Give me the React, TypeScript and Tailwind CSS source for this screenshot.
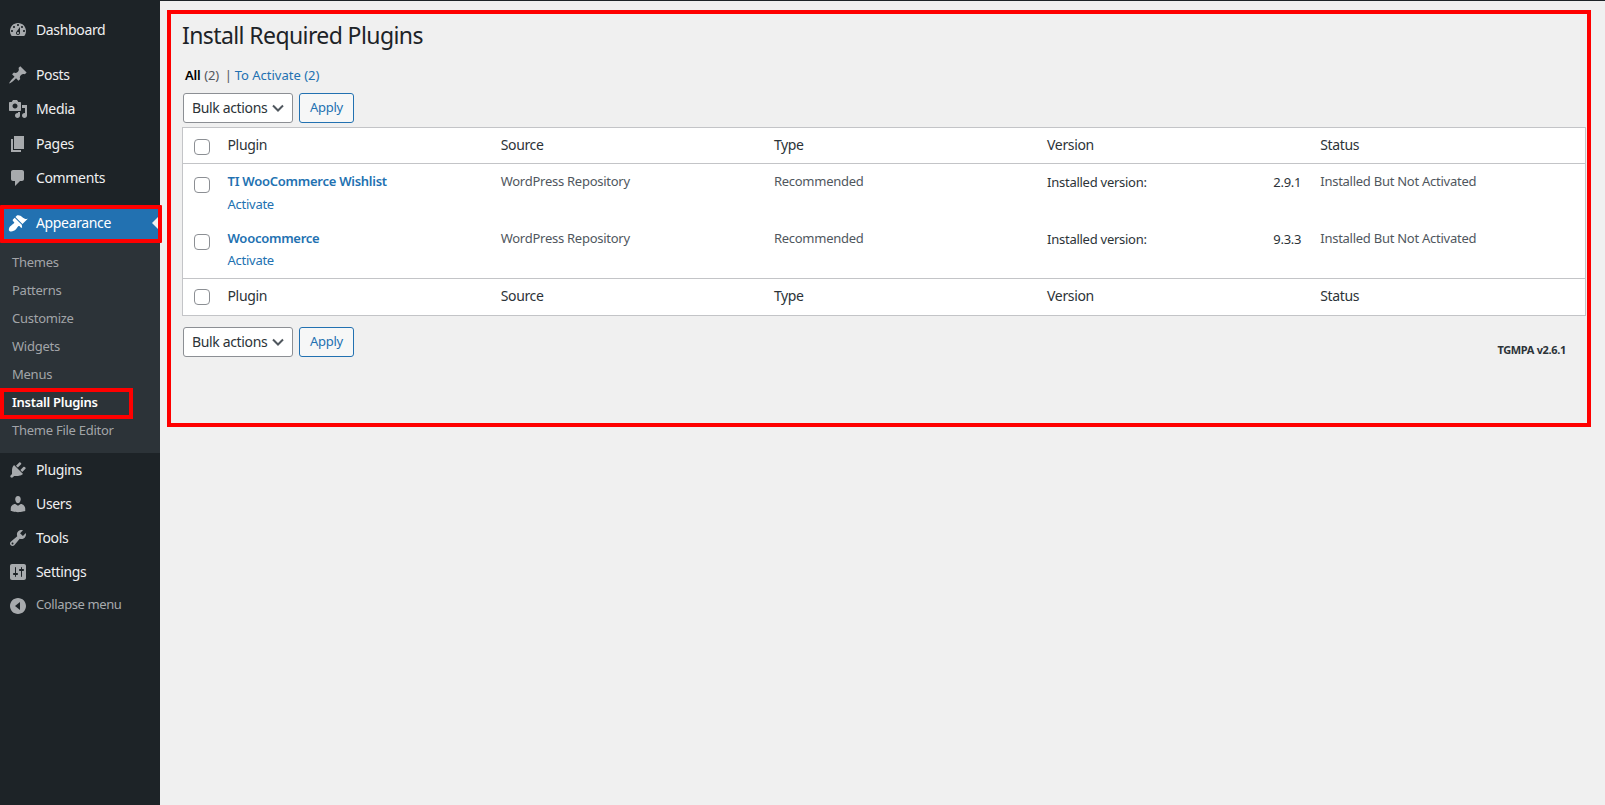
const FONT = "font-['Noto_Sans',sans-serif]";

const ICONS: Record<string, string> = {
    dashboard: 'M3.76 16h12.48c1.1-1.37 1.76-3.11 1.76-5 0-4.42-3.58-8-8-8s-8 3.58-8 8c0 1.89.66 3.63 1.76 5zM10 4c.55 0 1 .45 1 1s-.45 1-1 1-1-.45-1-1 .45-1 1-1zM6 6c.55 0 1 .45 1 1s-.45 1-1 1-1-.45-1-1 .45-1 1-1zm8 0c.55 0 1 .45 1 1s-.45 1-1 1-1-.45-1-1 .45-1 1-1zm-5.37 5.55L12 7v6c0 1.1-.9 2-2 2s-2-.9-2-2c0-.57.24-1.08.63-1.45zM4 10c.55 0 1 .45 1 1s-.45 1-1 1-1-.45-1-1 .45-1 1-1zm12 0c.55 0 1 .45 1 1s-.45 1-1 1-1-.45-1-1 .45-1 1-1zm-5 3c0-.55-.45-1-1-1s-1 .45-1 1 .45 1 1 1 1-.45 1-1z',
    posts: 'M10.44 3.02l1.82-1.82 6.36 6.35-1.83 1.82c-1.05-.68-2.48-.57-3.41.36l-.75.75c-.92.93-1.04 2.35-.35 3.41l-1.83 1.82-2.41-2.41-2.8 2.79c-.42.42-3.38 2.71-3.8 2.29s1.86-3.39 2.28-3.81l2.79-2.79L4.1 9.36l1.83-1.82c1.05.69 2.48.57 3.4-.36l.75-.75c.93-.92 1.05-2.35.36-3.41z',
    media: 'M13 11V4c0-.55-.45-1-1-1h-1.67L9 1H5L3.67 3H2c-.55 0-1 .45-1 1v7c0 .55.45 1 1 1h10c.55 0 1-.45 1-1zM7 4.5c1.38 0 2.5 1.12 2.5 2.5S8.38 9.5 7 9.5 4.5 8.38 4.5 7 5.62 4.5 7 4.5zM14 6h5v10.5c0 1.38-1.12 2.5-2.5 2.5S14 17.88 14 16.5s1.12-2.5 2.5-2.5c.17 0 .34.02.5.05V9h-3V6zm-4 8.05V13h2v3.5c0 1.38-1.12 2.5-2.5 2.5S7 17.88 7 16.5 8.12 14 9.5 14c.17 0 .34.02.5.05z',
    pages: 'M6 15V2h10v13H6zm-1 1h8v2H3V5h2v11z',
    comments: 'M5 2h9c1.1 0 2 .9 2 2v7c0 1.1-.9 2-2 2h-2l-5 5v-5H5c-1.1 0-2-.9-2-2V4c0-1.1.9-2 2-2z',
    appearance: 'M14.48 11.06L7.41 3.99l1.5-1.5c.5-.56 2.3-.47 3.51.32 1.21.8 1.43 1.28 2.91 2.1 1.18.64 2.45 1.26 4.45.85zm-.71.71L6.7 4.7 4.93 6.47c-.39.39-.39 1.02 0 1.41l1.06 1.06c.39.39.39 1.03 0 1.42-.6.6-1.43 1.11-2.21 1.69-.35.26-.7.53-1.01.84C1.43 13.23.1 16.63 1.4 17.9c.4.4 1.06.6 1.8.6 1.64 0 3.64-1.01 4.53-1.9.3-.31.57-.66.83-1.02.58-.77 1.08-1.6 1.69-2.21.39-.39 1.02-.39 1.41 0l1.06 1.06c.39.39 1.02.39 1.41 0z',
    plugins: 'M13.11 4.36L9.87 7.6 8 5.73l3.24-3.24c.35-.34 1.05-.2 1.56.32.52.51.66 1.21.31 1.55zm-8 1.77l.91-1.12 9.01 9.01-1.19.84c-.71.71-2.63 1.16-3.82 1.16H6.14L4.9 17.26c-.59.59-1.54.59-2.12 0-.59-.58-.59-1.53 0-2.12l1.24-1.24v-3.88c0-1.13.4-3.19 1.09-3.89zm7.26 3.97l3.24-3.24c.34-.35 1.04-.21 1.55.31.52.51.66 1.21.31 1.55l-3.24 3.25z',
    users: 'M10 9.25c-2.27 0-2.73-3.44-2.73-3.44C7 4.02 7.82 2 9.97 2c2.16 0 2.98 2.02 2.71 3.81 0 0-.41 3.44-2.68 3.44zm0 2.57L12.72 10c2.39 0 4.52 2.33 4.52 4.53v2.49s-3.65 1.13-7.24 1.13c-3.65 0-7.24-1.13-7.24-1.13v-2.49c0-2.25 1.94-4.48 4.47-4.48z',
    tools: 'M16.68 9.77c-1.34 1.34-3.3 1.67-4.95.99l-5.41 6.52c-.99.99-2.59.99-3.58 0s-.99-2.59 0-3.57l6.52-5.42c-.68-1.65-.35-3.61.99-4.95 1.28-1.28 3.12-1.62 4.72-1.06l-2.89 2.89 2.82 2.82 2.86-2.87c.53 1.58.18 3.39-1.08 4.65zM3.81 16.21c.4.39 1.04.39 1.43 0 .4-.4.4-1.04 0-1.43-.39-.4-1.03-.4-1.43 0-.39.39-.39 1.03 0 1.43z',
    settings: 'M18 16V4c0-1.1-.9-2-2-2H4c-1.1 0-2 .9-2 2v12c0 1.1.9 2 2 2h12c1.1 0 2-.9 2-2zM8 11h1c.55 0 1 .45 1 1s-.45 1-1 1H8v1.5c0 .28-.22.5-.5.5s-.5-.22-.5-.5V13H6c-.55 0-1-.45-1-1s.45-1 1-1h1V5.5c0-.28.22-.5.5-.5s.5.22.5.5V11zm5-2h-1c-.55 0-1-.45-1-1s.45-1 1-1h1V5.5c0-.28.22-.5.5-.5s.5.22.5.5V7h1c.55 0 1 .45 1 1s-.45 1-1 1h-1v5.5c0 .28-.22.5-.5.5s-.5-.22-.5-.5V9z',
    collapse: 'M10 2c4.42 0 8 3.58 8 8s-3.58 8-8 8-8-3.58-8-8 3.58-8 8-8zm2 4l-5 4 5 4z',
};

const Icon = ({ name, className }: { name: string; className: string }) => (
    <span className="flex w-9 shrink-0 justify-center">
        <svg viewBox="0 0 20 20" className={`h-5 w-5 fill-current ${className}`}>
            <path fillRule="evenodd" d={ICONS[name]} />
        </svg>
    </span>
);

const MenuItem = ({ icon, label }: { icon: string; label: string }) => (
    <div className="flex h-[34px] items-center text-[14px] tracking-[-0.025em] text-[#f0f0f1]">
        <Icon name={icon} className="text-[#a7aaad]" />
        <span className="pb-[2px]">{label}</span>
    </div>
);

const SUBMENU = ['Themes', 'Patterns', 'Customize', 'Widgets', 'Menus', 'Install Plugins', 'Theme File Editor'];

function Sidebar() {
    return (
        <aside className="w-40 shrink-0 bg-[#1d2327] pt-[13px]">
            <MenuItem icon="dashboard" label="Dashboard" />
            <div className="mt-[11px]">
                <MenuItem icon="posts" label="Posts" />
                <MenuItem icon="media" label="Media" />
                <div className="mt-px">
                    <MenuItem icon="pages" label="Pages" />
                    <MenuItem icon="comments" label="Comments" />
                </div>
            </div>
            {/* Appearance is the open menu */}
            <div className="relative mt-[11px] flex h-[34px] items-center bg-[#2271b1] text-[14px] tracking-[-0.025em] text-white">
                <Icon name="appearance" className="text-white" />
                <span className="pb-[1px]">Appearance</span>
                <span className="absolute right-[2px] top-1/2 h-0 w-0 -translate-y-1/2 border-y-[6px] border-r-[6px] border-y-transparent border-r-[#f0f0f1]" />
                <span className="pointer-events-none absolute -bottom-[3px] -right-[2px] -top-[1px] left-0 rounded-[1px] border-4 border-[#ff0000]" />
            </div>
            <div className="bg-[#2c3338] pb-[8px] pt-[9px]">
                {SUBMENU.map(item => item === 'Install Plugins' ? (
                    <div key={item} className="relative flex h-[28px] items-center pl-3 text-[13px] font-semibold tracking-[-0.02em] text-white">
                        {item}
                        <span className="pointer-events-none absolute -bottom-[2px] -top-[1px] left-0 w-[133px] border-4 border-[#ff0000]" />
                    </div>
                ) : (
                    <div key={item} className="flex h-[28px] items-center pl-3 text-[13px] tracking-[-0.02em] text-[#c3c4c7]/80">{item}</div>
                ))}
            </div>
            <MenuItem icon="plugins" label="Plugins" />
            <MenuItem icon="users" label="Users" />
            <MenuItem icon="tools" label="Tools" />
            <MenuItem icon="settings" label="Settings" />
            <div className="flex h-[34px] items-center text-[13px] tracking-[-0.03em] text-[#a7aaad]">
                <Icon name="collapse" className="text-[#a7aaad]" />
                <span className="pb-[2px]">Collapse menu</span>
            </div>
        </aside>
    );
}

const Checkbox = () => <span className="ml-[11px] block h-4 w-4 rounded-[4px] border border-[#8c8f94] bg-white" />;

function BulkActions() {
    return (
        <div className="flex gap-[6px]">
            <div className="flex h-[30px] w-[110px] items-center justify-between rounded-[3px] border border-[#8c8f94] bg-white px-2 text-[14px] tracking-[-0.025em] text-[#2c3338]">
                <span className="pb-[2px]">Bulk actions</span>
                <svg viewBox="0 0 12 8" className="h-2 w-3 fill-none stroke-[#50575e] stroke-2"><path d="M1 1.5l5 5 5-5" /></svg>
            </div>
            <div className="flex h-[30px] w-[55px] items-center justify-center rounded-[3px] border border-[#2271b1] bg-[#f6f7f7] text-[13px] tracking-[-0.02em] text-[#2271b1]">Apply</div>
        </div>
    );
}

const COLUMNS = ['Plugin', 'Source', 'Type', 'Version', 'Status'];

const HeadRow = ({ foot }: { foot?: boolean }) => (
    <tr className={`text-left text-[14px] font-normal tracking-[-0.025em] text-[#2c3338] ${foot ? 'h-[37px]' : 'h-[36px]'}`}>
        <td className={foot ? '' : 'pt-[3px]'}><Checkbox /></td>
        {COLUMNS.map(c => <td key={c} className={`px-2 ${foot ? 'pb-[4px]' : 'pb-[2px]'}`}>{c}</td>)}
    </tr>
);

const PLUGINS = [
    { name: 'TI WooCommerce Wishlist', version: '2.9.1', height: 'h-[57px]' },
    { name: 'Woocommerce', version: '9.3.3', height: 'h-[58px]' },
];

export default function App() {
    return (
        <div className={`flex min-h-[805px] bg-[#f0f0f0] ${FONT}`}>
            <Sidebar />
            <main className="min-w-0 flex-1 border-t border-[#1d2327] pl-[7px] pr-[14px] pt-[9px]">
                <div className="h-[417px] border-4 border-[#ff0000] pl-[11px] pr-[1px] pt-[7px]">
                    <h1 className="text-[23px] leading-[28px] tracking-[-0.026em] text-[#1d2327]">Install Required Plugins</h1>
                    <div className="mt-[17px] flex h-[20px] items-center pl-[3px] text-[13px] tracking-[-0.02em] text-[#50575e]">
                        <span className="font-semibold text-black">All</span>
                        <span className="ml-[4px]">(2)</span>
                        <span className="ml-[6px] mr-[3px] text-[#50575e]">|</span>
                        <span className="tracking-[0em] text-[#2271b1]">To Activate (2)</span>
                    </div>
                    <div className="ml-px mt-[7px]"><BulkActions /></div>
                    <table className="mt-[4px] w-full table-fixed border border-[#c3c4c7] bg-white">
                        <colgroup>
                            <col className="w-[37px]" />
                        </colgroup>
                        <thead className="border-b border-[#c3c4c7]"><HeadRow /></thead>
                        <tbody>
                            {PLUGINS.map(p => (
                                <tr key={p.name} className={`${p.height} align-top text-[13px] tracking-[-0.02em] text-[#50575e]`}>
                                    <td className="pt-[13px]"><Checkbox /></td>
                                    <td className="px-2 pt-[8px]">
                                        <div className="font-semibold text-[#2271b1]">{p.name}</div>
                                        <div className="mt-[3px] text-[#2271b1]">Activate</div>
                                    </td>
                                    <td className="px-2 pt-[8px]">WordPress Repository</td>
                                    <td className="px-2 pt-[8px]">Recommended</td>
                                    <td className="px-2 pt-[9px]">
                                        <div className="flex justify-between pr-[3px] text-[#2c3338]">
                                            <span>Installed version:</span>
                                            <span>{p.version}</span>
                                        </div>
                                    </td>
                                    <td className="px-2 pt-[8px]">Installed But Not Activated</td>
                                </tr>
                            ))}
                        </tbody>
                        <tfoot className="border-t border-[#c3c4c7]"><HeadRow foot /></tfoot>
                    </table>
                    <div className="ml-px mt-[11px] flex items-start justify-between">
                        <BulkActions />
                        <p className="pr-[20px] pt-[15px] text-[11px] font-bold leading-[16px] tracking-[-0.03em] text-[#2c3338]">TGMPA v2.6.1</p>
                    </div>
                </div>
            </main>
        </div>
    );
}
